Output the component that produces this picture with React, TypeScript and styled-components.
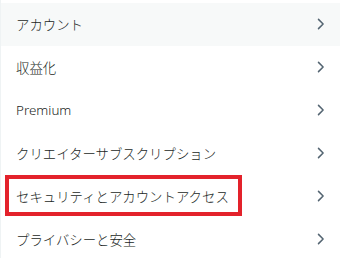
import React from "react";
import styled, { createGlobalStyle } from "styled-components";

const GlobalStyle = createGlobalStyle`
  html, body {
    margin: 0;
    padding: 0;
    background: #ffffff;
  }
  body {
    font-family: "Noto Sans", "Noto Sans CJK JP", sans-serif;
  }
`;

const Menu = styled.nav`
  width: 340px;
  padding-top: 3px;
  border-left: 1px solid #eff3f4;
  box-sizing: border-box;
`;

const Row = styled.div<{ $active?: boolean }>`
  display: flex;
  align-items: center;
  justify-content: space-between;
  height: 43px;
  padding: 0 11px 1px 15px;
  box-sizing: border-box;
  background: ${(p) => (p.$active ? "#f7f9f9" : "transparent")};
  color: #1a1f24;
  font-size: 13.4px;
  font-weight: 300;
  cursor: pointer;
`;

const Label = styled.span<{ $marked?: boolean }>`
  display: flex;
  align-items: center;
  box-sizing: border-box;
  ${(p) =>
    p.$marked
      ? `
    align-self: flex-start;
    height: 41px;
    margin-left: -11px;
    padding: 0 9px 0 7px;
    border: 4px solid #e3222b;
  `
      : ""}
`;

const Chevron = () => (
  <svg width="16" height="16" viewBox="0 0 16 16" aria-hidden="true">
    <path
      d="M5.5 3.4 L10.1 8 L5.5 12.6"
      fill="none"
      stroke="#536471"
      strokeWidth="1.5"
      strokeLinecap="round"
      strokeLinejoin="round"
    />
  </svg>
);

const items = [
  { label: "アカウント", active: true },
  { label: "収益化" },
  { label: "Premium" },
  { label: "クリエイターサブスクリプション" },
  { label: "セキュリティとアカウントアクセス", marked: true },
  { label: "プライバシーと安全" },
];

export default function App() {
  return (
    <>
      <GlobalStyle />
      <Menu>
        {items.map((it) => (
          <Row key={it.label} $active={it.active}>
            <Label $marked={it.marked}>{it.label}</Label>
            <Chevron />
          </Row>
        ))}
      </Menu>
    </>
  );
}
